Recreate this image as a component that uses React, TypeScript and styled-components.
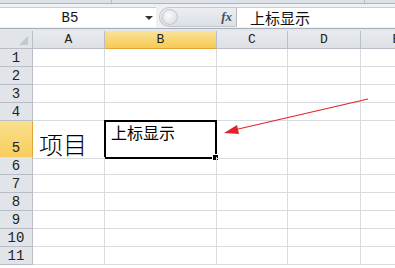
import styled, { createGlobalStyle } from "styled-components";

const GlobalStyle = createGlobalStyle`
    html, body {
        margin: 0;
        padding: 0;
        width: 395px;
        height: 268px;
        overflow: hidden;
        background: #ffffff;
    }
`

const columns = ["A", "B", "C", "D", "E"]
const rows = [1, 2, 3, 4, 5, 6, 7, 8, 9, 10, 11]

export default function App() {
    return (
        <Window>
            <GlobalStyle />
            <TopStrip>
                <StripPart $width={111} />
                <StripPart $width={252} />
                <StripPart $width={32} />
            </TopStrip>
            <FormulaBar>
                <NameBox>
                    B5
                    <DropArrow />
                </NameBox>
                <Pill>
                    <Knob />
                    <Fx>fx</Fx>
                </Pill>
                <FormulaInput>上标显示</FormulaInput>
            </FormulaBar>
            <Sheet>
                <Grid>
                    <Corner>
                        <CornerMark />
                    </Corner>
                    {columns.map((c) => (
                        <ColHeader key={c} $active={c === "B"}>{c}</ColHeader>
                    ))}
                    {rows.map((r) => (
                        <Row key={r} r={r} />
                    ))}
                </Grid>
                <Arrow width="160" height="50" viewBox="0 0 160 50">
                    <line x1="148" y1="8" x2="14" y2="39" stroke="#e0242a" strokeWidth="1.2" />
                    <polygon points="4,42 17,34 19,43" fill="#e0242a" />
                </Arrow>
            </Sheet>
        </Window>
    );
}

const Row = ({ r }: { r: number }) => {
    const tall = r === 5
    return (
        <>
            <RowHeader $active={tall} $tall={tall}>{r}</RowHeader>
            <Cell $tall={tall}>{tall && <BigText>项目</BigText>}</Cell>
            <Cell $tall={tall}>
                {tall && (
                    <Selected>
                        <CellText>上标显示</CellText>
                        <FillHandle />
                    </Selected>
                )}
            </Cell>
            <Cell $tall={tall} />
            <Cell $tall={tall} />
            <Cell $tall={tall} />
        </>
    )
}

const Window = styled.div`
    width: 395px;
    height: 268px;
    overflow: hidden;
    display: flex;
    flex-direction: column;
    font-family: "Liberation Mono", "Noto Sans CJK SC", monospace;
`

const TopStrip = styled.div`
    height: 3px;
    flex-shrink: 0;
    display: flex;
    background: #dde2e8;
    border-bottom: 1px solid #aeb5bf;
`

const StripPart = styled.div<{ $width: number }>`
    width: ${(p) => p.$width}px;
    border-right: 1px solid #b8bec7;
    flex-shrink: 0;
`

const FormulaBar = styled.div`
    height: 25px;
    flex-shrink: 0;
    display: flex;
    align-items: flex-start;
    padding-top: 3px;
    box-sizing: border-box;
    background: #eef0f3;
    border-bottom: 1px solid #a9b0b9;
`

const NameBox = styled.div`
    position: relative;
    width: 156px;
    height: 20px;
    box-sizing: border-box;
    background: #ffffff;
    border-top: 1px solid #c9ced5;
    display: flex;
    align-items: center;
    justify-content: center;
    padding-right: 16px;
    font-family: "Liberation Mono", monospace;
    font-size: 14px;
    color: #111;
`

const DropArrow = styled.span`
    position: absolute;
    right: 3px;
    top: 8px;
    width: 0;
    height: 0;
    border-left: 4px solid transparent;
    border-right: 4px solid transparent;
    border-top: 4px solid #333;
`

const Pill = styled.div`
    width: 78px;
    height: 20px;
    margin-left: 3px;
    box-sizing: border-box;
    display: flex;
    align-items: center;
    justify-content: space-between;
    padding: 0 4px 0 2px;
    border-radius: 10px 0 0 10px;
    border: 1px solid #c3c8cf;
    border-right: 1px solid #b3b9c1;
    background: linear-gradient(#eceef1, #dcdfe4);
`

const Knob = styled.div`
    width: 16px;
    height: 16px;
    border-radius: 50%;
    background: radial-gradient(circle at 40% 40%, #fbfbfc, #d3d7dc);
    border: 1px solid #c4c9d0;
    box-sizing: border-box;
`

const Fx = styled.span`
    font-family: "Liberation Serif", serif;
    font-style: italic;
    font-weight: bold;
    font-size: 13px;
    color: #4a4f56;
`

const FormulaInput = styled.div`
    flex: 1;
    height: 20px;
    box-sizing: border-box;
    background: #ffffff;
    border-top: 1px solid #c9ced5;
    padding-left: 13px;
    display: flex;
    align-items: center;
    font-family: "Noto Sans CJK SC", sans-serif;
    font-size: 15px;
    color: #111;
`

const Sheet = styled.div`
    position: relative;
    flex: 1;
    overflow: hidden;
    border-top: 2px solid #e3e6ea;
    background: #ffffff;
`

const Grid = styled.div`
    display: grid;
    grid-template-columns: 33px 72px 112px 71px 73px 72px;
    grid-auto-rows: 18px;
    background: #ffffff;
`

const HeaderBase = styled.div`
    box-sizing: border-box;
    border-right: 1px solid #b9bec6;
    border-bottom: 1px solid #b9bec6;
    display: flex;
    align-items: center;
    justify-content: center;
    font-family: "Liberation Mono", monospace;
    font-size: 13px;
    color: #222;
`

const Corner = styled(HeaderBase)`
    position: relative;
    background: #e1e5ea;
`

const CornerMark = styled.span`
    position: absolute;
    right: 4px;
    bottom: 3px;
    width: 0;
    height: 0;
    border-left: 9px solid transparent;
    border-bottom: 9px solid #c2c8d0;
`

const ColHeader = styled(HeaderBase)<{ $active: boolean }>`
    background: ${(p) => (p.$active ? "linear-gradient(#fbe39c, #f6c952)" : "linear-gradient(#e8ebef, #dde1e6)")};
    border-bottom-color: ${(p) => (p.$active ? "#e2a637" : "#b9bec6")};
`

const RowHeader = styled(HeaderBase)<{ $active: boolean; $tall: boolean }>`
    grid-row: span ${(p) => (p.$tall ? 2 : 1)};
    height: ${(p) => (p.$tall ? 38 : 18)}px;
    align-items: ${(p) => (p.$tall ? "flex-end" : "center")};
    padding-bottom: ${(p) => (p.$tall ? 2 : 0)}px;
    background: ${(p) => (p.$active ? "linear-gradient(#fbe08e, #f7cc5c)" : "#e1e5ea")};
    border-right-color: ${(p) => (p.$active ? "#e2a637" : "#b9bec6")};
    font-size: 14px;
`

const Cell = styled.div<{ $tall: boolean }>`
    position: relative;
    grid-row: span ${(p) => (p.$tall ? 2 : 1)};
    height: ${(p) => (p.$tall ? 38 : 18)}px;
    box-sizing: border-box;
    border-right: 1px solid #d8dadd;
    border-bottom: 1px solid #d8dadd;
    display: flex;
    align-items: flex-end;
    overflow: visible;
`

const BigText = styled.span`
    font-family: "Noto Sans CJK SC", sans-serif;
    font-size: 24px;
    font-weight: 300;
    line-height: 28px;
    margin-left: 6px;
    color: #000;
`

const Selected = styled.div`
    position: absolute;
    left: -1px;
    top: -1px;
    width: 113px;
    height: 39px;
    box-sizing: border-box;
    border: 2px solid #000;
    padding: 0 0 0 5px;
`

const CellText = styled.span`
    font-family: "Noto Sans CJK SC", sans-serif;
    font-size: 16px;
    line-height: 20px;
    color: #000;
`

const FillHandle = styled.span`
    position: absolute;
    right: -4px;
    bottom: -4px;
    width: 5px;
    height: 5px;
    background: #000;
    border: 1px solid #fff;
`

const Arrow = styled.svg`
    position: absolute;
    left: 220px;
    top: 60px;
`
